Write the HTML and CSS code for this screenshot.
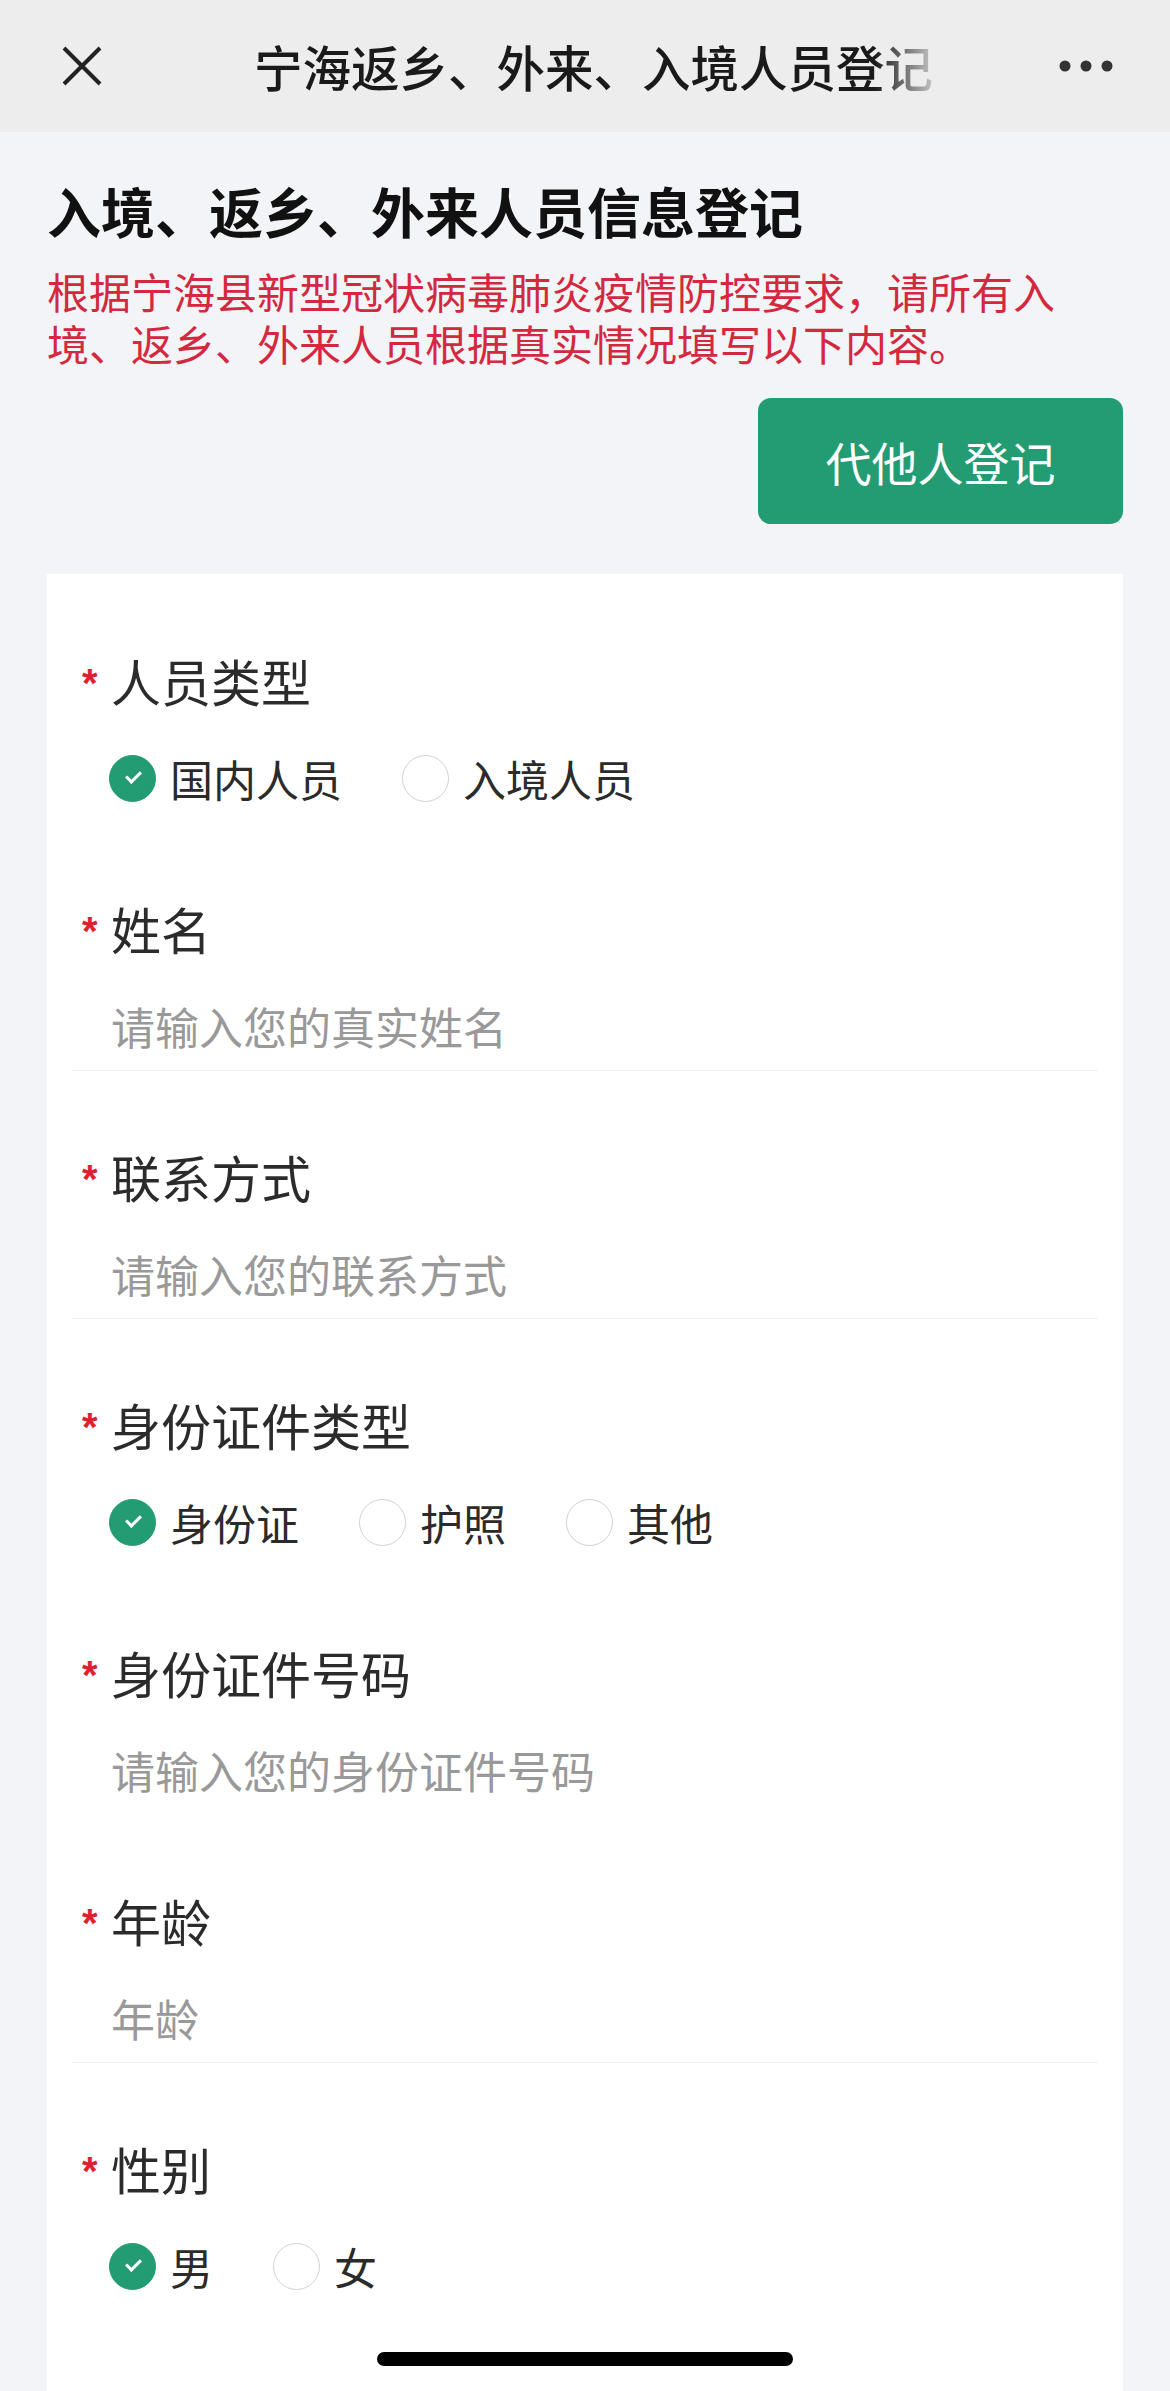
FILE: index.html
```html
<!DOCTYPE html>
<html lang="zh-CN">
<head>
    <meta charset="UTF-8">
    <meta name="viewport" content="width=device-width, initial-scale=1.0">
    <title>宁海返乡、外来、入境人员登记</title>
    <link rel="stylesheet" href="styles.css">
</head>
<body>

<div class="navBar">
    <svg class="navClose" width="40" height="40" viewBox="0 0 40 40">
        <path d="M2 2 L38 38 M38 2 L2 38" stroke="#222" stroke-width="4" fill="none"/>
    </svg>
    <div class="navTitle">宁海返乡、外来、入境人员登记</div>
    <svg class="navMore" width="54" height="12" viewBox="0 0 54 12">
        <circle cx="6" cy="6" r="5.5" fill="#333"/>
        <circle cx="27" cy="6" r="5.5" fill="#333"/>
        <circle cx="48" cy="6" r="5.5" fill="#333"/>
    </svg>
</div>

<div class="page">
    <h1 class="pageTitle">入境、返乡、外来人员信息登记</h1>
    <p class="notice">根据宁海县新型冠状病毒肺炎疫情防控要求，请所有入境、返乡、外来人员根据真实情况填写以下内容。</p>

    <div class="actions">
        <button class="proxyBtn">代他人登记</button>
    </div>

    <div class="formCard">
        <div class="field noLine">
            <div class="fieldLabel"><span class="req">*</span>人员类型</div>
            <div class="radioGroup">
                <label class="radio checked"><span class="dot"></span>国内人员</label>
                <label class="radio"><span class="dot"></span>入境人员</label>
            </div>
        </div>

        <div class="field">
            <div class="fieldLabel"><span class="req">*</span>姓名</div>
            <div class="input">请输入您的真实姓名</div>
        </div>

        <div class="field">
            <div class="fieldLabel"><span class="req">*</span>联系方式</div>
            <div class="input">请输入您的联系方式</div>
        </div>

        <div class="field noLine">
            <div class="fieldLabel"><span class="req">*</span>身份证件类型</div>
            <div class="radioGroup">
                <label class="radio checked"><span class="dot"></span>身份证</label>
                <label class="radio"><span class="dot"></span>护照</label>
                <label class="radio"><span class="dot"></span>其他</label>
            </div>
        </div>

        <div class="field noLine">
            <div class="fieldLabel"><span class="req">*</span>身份证件号码</div>
            <div class="input">请输入您的身份证件号码</div>
        </div>

        <div class="field">
            <div class="fieldLabel"><span class="req">*</span>年龄</div>
            <div class="input">年龄</div>
        </div>

        <div class="field noLine">
            <div class="fieldLabel"><span class="req">*</span>性别</div>
            <div class="radioGroup">
                <label class="radio checked"><span class="dot"></span>男</label>
                <label class="radio"><span class="dot"></span>女</label>
            </div>
        </div>
    </div>
</div>

<div class="homeBar"></div>

</body>
</html>
```

FILE: styles.css
```css
html, body {
  margin: 0;
  padding: 0;
  background-color: #f3f4f7;
  font-family: "Noto Sans CJK SC", "Noto Sans", sans-serif;
  overflow: hidden;
}

.navBar {
  height: 132px;
  background-color: #ededed;
  display: flex;
  align-items: center;
}

.navClose {
  margin-left: 62px;
  flex-shrink: 0;
}

.navTitle {
  margin-left: 152px;
  width: 682px;
  white-space: nowrap;
  font-size: 48.5px;
  font-weight: 500;
  line-height: 60px;
  color: #1a1a1a;
  -webkit-mask-image: linear-gradient(to right, #000 91%, rgba(0, 0, 0, 0.15) 100%);
  mask-image: linear-gradient(to right, #000 91%, rgba(0, 0, 0, 0.15) 100%);
}

.navMore {
  margin-left: auto;
  margin-right: 57px;
}

.page {
  padding: 47px 47px 0;
}

.pageTitle {
  margin: 0;
  font-size: 54px;
  line-height: 64px;
  font-weight: 700;
  color: #111;
}

.notice {
  margin: 22px 0 0;
  font-size: 42px;
  line-height: 52px;
  color: #d4283f;
}

.actions {
  display: flex;
  justify-content: flex-end;
  margin-top: 29px;
}

.proxyBtn {
  width: 365px;
  height: 126px;
  border: none;
  border-radius: 13px;
  background-color: #239b73;
  color: #fff;
  font-family: inherit;
  font-size: 46px;
  padding: 0;
}

.formCard {
  margin-top: 50px;
  background-color: #fff;
  padding: 1px 0 120px;
}

.field {
  margin: 0 25px;
  padding: 75px 0 14px;
  border-bottom: 1px solid #f2f2f2;
}

.field.noLine {
  border-bottom-color: transparent;
}

.fieldLabel {
  display: flex;
  align-items: flex-start;
  padding-left: 10px;
  font-size: 50px;
  line-height: 60px;
  color: #2b2b2b;
}

.req {
  width: 29px;
  flex-shrink: 0;
  font-family: "Liberation Sans", sans-serif;
  font-weight: 700;
  font-size: 40px;
  line-height: 40px;
  margin-top: 13px;
  color: #e0202e;
}

.input {
  margin-top: 38px;
  padding-left: 39px;
  font-size: 44px;
  line-height: 60px;
  color: #999;
}

.radioGroup {
  margin-top: 38px;
  padding-left: 37px;
  display: flex;
  gap: 60px;
}

.radio {
  display: flex;
  align-items: center;
  gap: 14px;
  font-size: 43px;
  line-height: 60px;
  color: #2b2b2b;
}

.dot {
  width: 45px;
  height: 45px;
  border: 1px solid #d2d2d2;
  border-radius: 50%;
  box-sizing: content-box;
  position: relative;
}

.radio.checked .dot {
  background-color: #239b73;
  border-color: #239b73;
}

/* check mark */
.radio.checked .dot::after {
  content: "";
  position: absolute;
  left: 16px;
  top: 15px;
  width: 12px;
  height: 6px;
  border-left: 3px solid #fff;
  border-bottom: 3px solid #fff;
  transform: rotate(-45deg);
}

.homeBar {
  position: fixed;
  left: 377px;
  bottom: 25px;
  width: 416px;
  height: 14px;
  border-radius: 7px;
  background-color: #000;
}
```
